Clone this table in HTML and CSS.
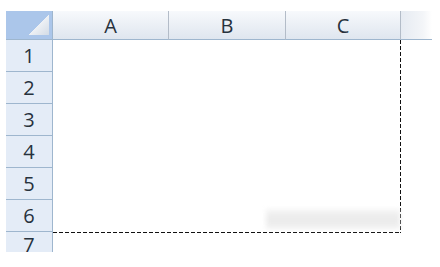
FILE: index.html
```html
<!DOCTYPE html>
<html lang="en">
<head>
  <meta charset="UTF-8" />
  <title>Sheet</title>
  <link rel="stylesheet" href="styles.css">
</head>
<body>
  <div class="sheet">
    <div class="corner"></div>
    <div class="col-head">A</div>
    <div class="col-head">B</div>
    <div class="col-head">C</div>
    <div class="col-head col-fade"></div>

    <div class="row-head">1</div>
    <div class="print-area"></div>
    <div class="blank"></div>
    <div class="row-head">2</div>
    <div class="blank"></div>
    <div class="row-head">3</div>
    <div class="blank"></div>
    <div class="row-head">4</div>
    <div class="blank"></div>
    <div class="row-head">5</div>
    <div class="blank"></div>
    <div class="row-head">6</div>
    <div class="blank"></div>
    <div class="row-head row-last">7</div>

    <div class="smudge"></div>
  </div>
</body>
</html>
```

FILE: styles.css
```css
body {
  margin: 0;
  background: #fff;
  font-family: "Open Sans", "Noto Sans", sans-serif;
  color: #27323d;
}

.sheet {
  position: relative;
  display: grid;
  grid-template-columns: 47px 116px 117px 115px 31px;
  grid-template-rows: 29px repeat(6, 32px) 20px;
  margin: 11px 0 0 6px;
  width: 426px;
}

.corner {
  border-right: 1px solid #9eb6ce;
  border-bottom: 1px solid #9eb6ce;
  background:
    linear-gradient(135deg, transparent 50%, #eef1f5 50%, #d2dbe6 100%) no-repeat right 3px bottom 4px / 20px 21px,
    #abc6ea;
}

.col-head {
  display: flex;
  align-items: center;
  justify-content: center;
  font-size: 20px;
  background: linear-gradient(to bottom, #f7f9fc, #dfe6ef);
  border-right: 1px solid #b3bcc8;
  border-bottom: 1px solid #9eb6ce;
}

.col-fade {
  border-right: none;
  background: linear-gradient(to right, #e6ebf2, #f3f5f8 70%, #fff);
}

.row-head {
  grid-column: 1;
  display: flex;
  align-items: center;
  justify-content: center;
  font-size: 20px;
  background: #e4ecf7;
  border-right: 1px solid #9eb6ce;
  border-bottom: 1px solid #9eb6ce;
}

.row-last {
  border-bottom: none;
  align-items: flex-start;
  padding-top: 2px;
  overflow: hidden;
  line-height: 22px;
}

/* dashed page-break lines, 4px dash / 2px gap */
.print-area {
  grid-column: 2 / 5;
  grid-row: 2 / 8;
  margin-bottom: -1px;
  background:
    repeating-linear-gradient(to bottom, #111 0 4px, transparent 4px 6px) no-repeat right top / 1px 100%,
    repeating-linear-gradient(to right, #111 0 4px, transparent 4px 6px) no-repeat left bottom / 100% 1px;
}

.blank {
  grid-column: 5;
}

.smudge {
  position: absolute;
  left: 260px;
  top: 198px;
  width: 134px;
  height: 20px;
  background: linear-gradient(to bottom, #f3f3f3, #e4e4e4 50%, #eeeeee);
  filter: blur(2px);
  opacity: 0.75;
}
```
